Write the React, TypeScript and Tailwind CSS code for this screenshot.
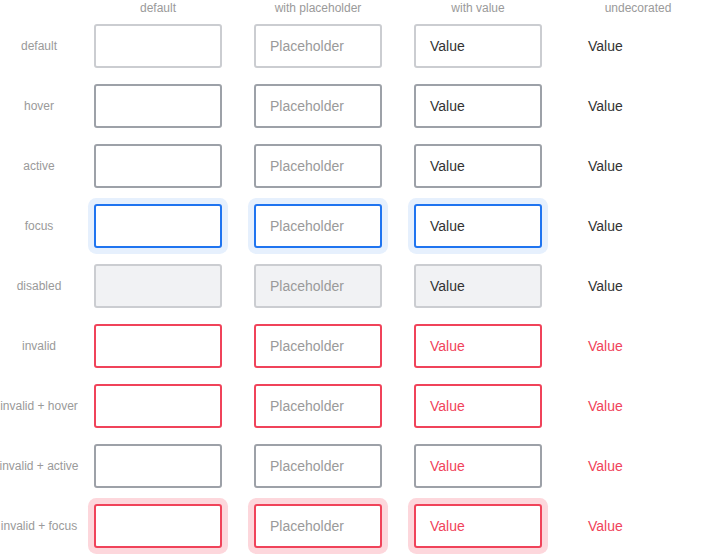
const rows = [
  "default",
  "hover",
  "active",
  "focus",
  "disabled",
  "invalid",
  "invalid + hover",
  "invalid + active",
  "invalid + focus",
];

const cols = ["default", "with placeholder", "with value", "undecorated"];

// box look per state
const boxClass = (state: string) => {
  switch (state) {
    case "default":
      return "border-[#cbcdd1] bg-white";
    case "hover":
    case "active":
    case "invalid + active":
      return "border-[#9da1a8] bg-white";
    case "focus":
      return "border-[#1f74f0] bg-white shadow-[0_0_0_6px_#e6f0fd]";
    case "disabled":
      return "border-[#cbcdd1] bg-[#f1f2f4]";
    case "invalid":
    case "invalid + hover":
      return "border-[#f0435a] bg-white";
    case "invalid + focus":
      return "border-[#f0435a] bg-white shadow-[0_0_0_6px_#fdd7dc]";
    default:
      return "";
  }
};

const Field = ({ state, col }: { state: string; col: number }) => {
  const invalid = state.startsWith("invalid");
  const textColor = invalid ? "text-[#f0435a]" : "text-[#333333]";
  if (col === 3) {
    return (
      <div className={`w-[128px] h-[44px] flex items-center px-[14px] text-[14px] ${textColor}`}>
        Value
      </div>
    );
  }
  return (
    <div
      className={`w-[128px] h-[44px] flex items-center border-2 rounded-[3px] px-[14px] text-[14px] ${boxClass(state)}`}
    >
      {col === 1 && <span className="text-[#9a9a9a]">Placeholder</span>}
      {col === 2 && <span className={textColor}>Value</span>}
    </div>
  );
};

export default function App() {
  return (
    <div className="w-[718px] h-[556px] bg-white font-['Liberation_Sans',Arial,sans-serif]">
      <div className="grid grid-cols-[78px_160px_160px_160px_160px] auto-rows-[60px] grid-rows-[16px]">
        <div />
        {cols.map((c) => (
          <div key={c} className="flex items-center justify-center text-[12px] text-[#9a9a9a] leading-none">
            {c}
          </div>
        ))}
        {rows.map((r) => (
          <div key={r} className="contents">
            <div className="flex items-center justify-center text-[12px] text-[#9a9a9a] whitespace-nowrap">
              {r}
            </div>
            {cols.map((c, i) => (
              <div key={c} className="flex items-center justify-center">
                <Field state={r} col={i} />
              </div>
            ))}
          </div>
        ))}
      </div>
    </div>
  );
}
